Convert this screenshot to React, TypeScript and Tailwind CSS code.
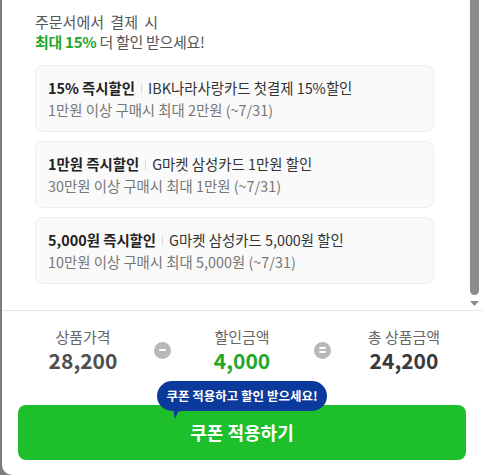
import React from "react";

type Offer = { title: string; card: string; cond: string };

const offers: Offer[] = [
  { title: "15% 즉시할인", card: "IBK나라사랑카드 첫결제 15%할인", cond: "1만원 이상 구매시 최대 2만원 (~7/31)" },
  { title: "1만원 즉시할인", card: "G마켓 삼성카드 1만원 할인", cond: "30만원 이상 구매시 최대 1만원 (~7/31)" },
  { title: "5,000원 즉시할인", card: "G마켓 삼성카드 5,000원 할인", cond: "10만원 이상 구매시 최대 5,000원 (~7/31)" },
];

const font = { fontFamily: '"Noto Sans CJK KR", "Noto Sans", sans-serif' };

function OfferCard({ offer }: { offer: Offer }) {
  return (
    <div className="rounded-[8px] border border-[#efefef] bg-[#fafafa] pl-[12px] pt-[11px] pb-[10px]">
      <div className="flex items-center text-[14.4px] leading-[22px] text-[#333]">
        <span className="font-bold text-[#222]">{offer.title}</span>
        <span className="mx-[6px] h-[11px] w-px bg-[#dcdcdc]" />
        <span>{offer.card}</span>
      </div>
      <p className="text-[14.4px] leading-[22px] text-[#777]">{offer.cond}</p>
    </div>
  );
}

function OpCircle({ sign }: { sign: "-" | "=" }) {
  return (
    <div className="flex h-[17px] w-[17px] shrink-0 flex-col items-center justify-center gap-[2px] rounded-full bg-[#b8b8b8]">
      <span className="h-[2px] w-[7px] rounded bg-white" />
      {sign === "=" && <span className="h-[2px] w-[7px] rounded bg-white" />}
    </div>
  );
}

export default function App() {
  return (
    <div className="flex h-[475px] w-[482px] bg-[#7c7c7c]" style={font}>
      <div className="ml-[2px] flex flex-1 flex-col rounded-bl-[10px] bg-white">
        {/* scrollable offer list */}
        <div className="flex h-[310px]">
          <div className="flex-1 pl-[33px] pr-[36px] pt-[12px]">
            <p className="text-[15px] leading-[20px] text-[#555] [word-spacing:3px]">주문서에서 결제 시</p>
            <p className="text-[15px] leading-[20px] text-[#555] tracking-[-0.3px]">
              <span className="font-bold text-[#22a82b]">최대 15%</span> 더 할인 받으세요!
            </p>
            <div className="mt-[13px] flex flex-col gap-[9px]">
              {offers.map((o) => (
                <OfferCard key={o.title} offer={o} />
              ))}
            </div>
          </div>
          <div className="mr-[3px] flex w-[9px] flex-col items-center">
            <div className="h-[295px] w-[9px] rounded-b-full bg-[#8c8c8c]" />
            <svg width="9" height="6" viewBox="0 0 9 6" className="mt-[6px]">
              <path d="M0 0h9L4.5 5z" fill="#8c8c8c" />
            </svg>
          </div>
        </div>

        {/* price summary */}
        <div className="border-t border-[#e6e6e6] pt-[16px]">
          <div className="flex items-center pl-[21px]">
            <div className="w-[120px] text-center">
              <p className="text-[15px] leading-[20px] text-[#666]">상품가격</p>
              <p className="text-[21px] font-bold leading-[26px] text-[#4f4f4f]">28,200</p>
            </div>
            <div className="ml-[11px] mr-[11px]">
              <OpCircle sign="-" />
            </div>
            <div className="w-[120px] text-center">
              <p className="text-[15px] leading-[20px] text-[#666]">할인금액</p>
              <p className="text-[21px] font-bold leading-[26px] text-[#21a82a]">4,000</p>
            </div>
            <div className="ml-[12px] mr-[13px]">
              <OpCircle sign="=" />
            </div>
            <div className="w-[120px] text-center">
              <p className="text-[15px] leading-[20px] text-[#666]">총 상품금액</p>
              <p className="text-[21px] font-bold leading-[26px] text-[#3a3a3a]">24,200</p>
            </div>
          </div>
        </div>

        {/* apply button with tooltip */}
        <div className="relative mx-[16px] mt-[32px]">
          <button className="flex h-[55px] w-full items-center justify-center rounded-[8px] bg-[#1dbf2b] text-[18px] font-bold text-white">
            쿠폰 적용하기
          </button>
          <div className="absolute left-[139px] top-[-24px]">
            <div className="flex h-[30px] w-[170px] items-center justify-center rounded-full bg-[#0c3a9c] text-[12.5px] font-bold text-white">
              쿠폰 적용하고 할인 받으세요!
            </div>
            <svg width="16" height="10" viewBox="0 0 16 10" className="absolute left-[14px] top-[28px]">
              <path d="M2 0h12L7 3 4 10z" fill="#0c3a9c" />
            </svg>
          </div>
        </div>
      </div>
    </div>
  );
}
